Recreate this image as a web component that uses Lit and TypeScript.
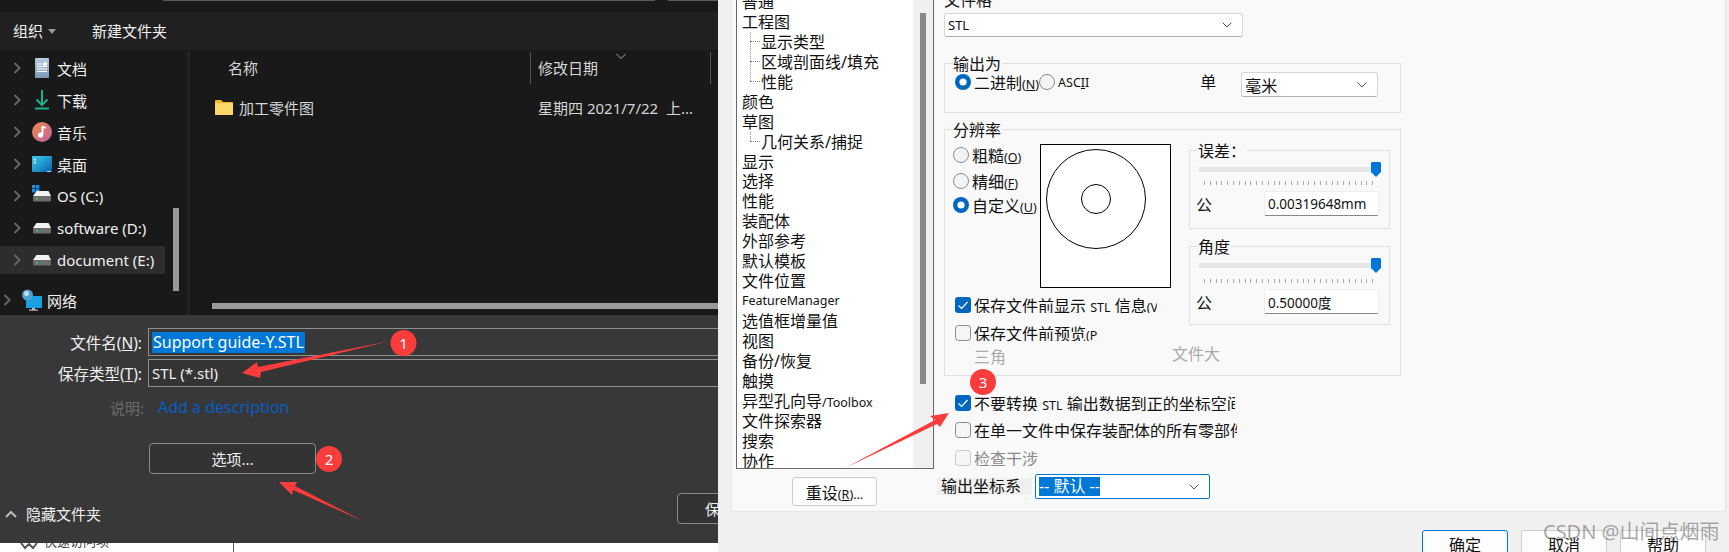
import { LitElement, html, css, svg } from "lit";
import { customElement } from "lit/decorators.js";

const chev = html`<svg class="chev" width="8" height="12" viewBox="0 0 8 12"><path d="M1.5 1 L6.5 6 L1.5 11" fill="none" stroke="#666" stroke-width="2"/></svg>`;
const drive = (win = false) => html`<svg width="22" height="22" viewBox="0 0 22 22">
  ${win ? svg`<g fill="#1a8fe3"><rect x="0" y="0" width="3.4" height="3.4"/><rect x="4" y="0" width="3.4" height="3.4"/><rect x="0" y="4" width="3.4" height="3.4"/><rect x="4" y="4" width="3.4" height="3.4"/></g>` : ""}
  <path d="M4.5 6 H16.5 L19 11 H1 Z" fill="#f2f2f2"/><rect x="1" y="11" width="18" height="5.5" rx="1" fill="#6c6c6c"/><rect x="4" y="13" width="2" height="1.4" fill="#3fd04f"/></svg>`;
const cb = svg`<path d="M3.5 8.5 L6.6 11.4 L12.5 5" fill="none" stroke="#fff" stroke-width="1.2"/>`;
const caret = html`<svg class="caret" width="12" height="8" viewBox="0 0 12 8"><path d="M1.5 1.5 L6 6 L10.5 1.5" fill="none" stroke="#555" stroke-width="1"/></svg>`;

@customElement("app-root")
export class AppRoot extends LitElement {
  static styles = css`
    :host { display: flex; width: 1729px; height: 552px; overflow: hidden; position: relative; font-family: "Noto Sans", "Noto Sans CJK SC", sans-serif; }
    * { box-sizing: border-box; }
    .win-l { width: 718px; height: 552px; flex: none; display: flex; flex-direction: column; color: #f0f0f0; font-size: 15px; overflow: hidden; background: #fff; }
    .top { height: 12px; background: #191919; flex: none; display: flex; }
    .top i { height: 1px; background: #5a5a5a; }
    .t1 { width: 492px; margin-left: 163px; }
    .t2 { width: 50px; margin-left: 13px; }
    .toolbar { height: 38px; background: #202020; flex: none; display: flex; align-items: center; padding-left: 13px; line-height: 20px; }
    .tri { width: 0; height: 0; border: 4.5px solid transparent; border-top: 5px solid #999; border-bottom: 0; margin: 0 36px 0 5px; }
    .nav { height: 265px; flex: none; background: #191919; display: flex; }
    .side { width: 187px; flex: none; display: flex; }
    .side-list { width: 173px; flex: none; padding-top: 2px; }
    .row { height: 32px; display: flex; align-items: center; padding: 0 0 0 13px; position: relative; white-space: nowrap; }
    .row .chev { margin-right: 11px; flex: none; }
    .row .ic { width: 22px; height: 22px; display: flex; flex: none; margin-right: 3px; }
    .row.sel { background: #2d2d2d; background-clip: content-box; padding: 2px 0; width: 165px; border-radius: 0 3px 3px 0; }
    .row.sel .chev { margin-left: 13px; }
    .row.net { margin-top: 8px; padding-left: 3px; }
    .scroll-col { width: 14px; padding: 158px 0 0 0; }
    .scroll-col i { display: block; width: 6px; height: 83px; background: #999; }
    .split { width: 3px; background: #222; flex: none; height: 264px; margin-top: 1px; }
    .main { flex: 1; display: flex; flex-direction: column; color: #d6d6d6; }
    .head { height: 33px; margin-top: 1px; display: flex; align-items: center; flex: none; }
    .h1 { width: 340px; padding-left: 38px; }
    .h2 { width: 181px; height: 32px; border-left: 1px solid #555; border-right: 1px solid #555; padding: 0 0 0 7px; display: flex; align-items: center; position: relative; }
    .sort { position: absolute; left: 84px; top: 1px; }
    .file { height: 26px; margin-top: 10px; display: flex; align-items: center; flex: none; }
    .f1 { width: 340px; display: flex; align-items: center; padding-left: 25px; gap: 6px; }
    .f2 { padding-left: 8px; white-space: pre; }
    .hbar { height: 6px; margin: 183px 0 0 22px; background: #999; flex: none; }
    .bottom { height: 228px; flex: none; background: #383838; padding-top: 13px; }
    .field { display: grid; grid-template-columns: 142px 1fr; column-gap: 6px; align-items: center; height: 28px; margin-bottom: 3px; }
    .field label { text-align: right; white-space: nowrap; font-size: 15.5px; }
    .field u { text-decoration: underline; }
    .inp { height: 28px; border: 1px solid #8f8f8f; border-right: 0; display: flex; align-items: center; padding-left: 3px; background: #343434; width: 600px; }
    .inp.a { background: #383838; }
    .seltext { background: #0078d7; color: #fff; height: 21px; display: flex; align-items: center; padding: 0 1px; font-size: 16px; white-space: nowrap; }
    .desc { display: grid; grid-template-columns: 144px 1fr; column-gap: 14px; align-items: center; height: 20px; margin-top: 9px; }
    .desc span:first-child { text-align: right; color: #6d6d6d; }
    .desc span:last-child { color: #0a5cc2; font-size: 16px; }
    .opt { width: 167px; height: 31px; margin: 27px 0 0 149px; border: 1px solid #8a8a8a; border-radius: 4px; background: #333; display: flex; align-items: center; justify-content: center; }
    .foot { display: flex; height: 31px; margin-top: 19px; }
    .hide { width: 677px; flex: none; padding: 11px 0 0 5px; display: flex; align-items: center; gap: 9px; height: 31px; line-height: 20px; }
    .save { width: 120px; height: 31px; border: 1px solid #8a8a8a; border-radius: 4px; background: #333; padding-left: 27px; display: flex; align-items: center; flex: none; white-space: nowrap; }
    .white { height: 9px; flex: none; background: #fff; display: flex; overflow: hidden; }
    .white-l { width: 234px; border-right: 1px solid #555; color: #444; font-size: 13px; line-height: 13px; padding: 0 0 0 20px; display: flex; gap: 6px; align-items: flex-start; white-space: nowrap; }
    .white-l span { margin-top: -8px; }

    .win-r { width: 1011px; height: 552px; flex: none; background: #f0f0f0; padding: 0 3px 0 13px; color: #111; font-size: 16px; display: flex; flex-direction: column; overflow: hidden; }
    .panel { height: 512px; flex: none; background: #f9f9f9; border: 1px solid #e6e6e6; border-top: 0; display: flex; }
    .tree-col { width: 202px; padding-left: 4px; flex: none; }
    .tree { height: 469px; width: 198px; border: 1px solid #696969; border-top: 0; background: #fff; display: flex; }
    .list { width: 176px; flex: none; overflow: hidden; padding: 0 0 0 5px; }
    .li { height: 19.95px; line-height: 20px; white-space: nowrap; }
    .list > .li:first-child { margin-top: -8px; }
    .li.lat { font-size: 12.5px; }
    .lat2 { font-size: 12.5px; }
    .subs { background: repeating-linear-gradient(#999 0 1px, transparent 1px 2px) 8px 0 / 1px calc(100% - 10px) no-repeat; }
    .sub { display: flex; align-items: center; padding-left: 8px; }
    .sub::before { content: ""; width: 10px; border-top: 1px dotted #888; margin-right: 1px; }
    .sbar { width: 20px; background: #f0f0f0; flex: none; padding: 13px 0 0 7px; }
    .sbar i { display: block; width: 6px; height: 371px; background: #888; }
    .reset { width: 85px; height: 29px; margin: 8px 0 0 56px; background: #fdfdfd; border: 1px solid #ccc; border-radius: 3px; display: flex; align-items: center; justify-content: center; }
    small { font-size: 12.5px; }
    .form { width: 457px; margin-left: 10px; flex: none; display: flex; flex-direction: column; }
    .cl { height: 20px; margin-top: -10px; line-height: 20px; }
    .sel-box { height: 24px; background: #fff; border: 1px solid #d5d5d5; border-bottom-color: #b0b0b0; border-radius: 3px; display: flex; align-items: center; justify-content: space-between; padding: 0 9px 0 3px; }
    .stl { width: 299px; margin-top: 3px; font-size: 13px; }
    .mm { width: 137px; height: 25px; margin-left: 41px; }
    .grp { border: 1px solid #e0e0e0; display: flex; flex-direction: column; flex: none; }
    .legend { height: 20px; line-height: 20px; margin: -10px 0 0 8px; align-self: flex-start; background: #f9f9f9; padding-right: 1px; }
    .g1 { height: 50px; margin-top: 26px; }
    .g1row { display: flex; height: 25px; margin-top: -2px; padding-left: 10px; }
    .radio { display: flex; align-items: center; gap: 3px; height: 20px; white-space: nowrap; }
    .radio svg { flex: none; }
    .unit { margin-left: 111px; width: 0; white-space: nowrap; height: 20px; line-height: 20px; }
    .g2 { height: 247px; margin-top: 16px; }
    .g2body { display: flex; }
    .g2l { width: 244px; flex: none; padding-left: 8px; }
    .g2top { display: flex; height: 148px; }
    .radios { width: 87px; flex: none; padding-top: 5px; display: flex; flex-direction: column; }
    .radios .radio:nth-child(2) { margin-top: 6px; }
    .radios .radio:nth-child(3) { margin-top: 4px; }
    .prev { margin-top: 4px; width: 131px; height: 144px; flex: none; border: 1px solid #000; background: #fff; display: flex; }
    .chk { display: flex; align-items: center; gap: 3px; height: 16px; white-space: nowrap; overflow: hidden; flex: none; }
    .chk svg { flex: none; }
    .c1 { width: 202px; margin: 9px 0 0 2px; }
    .c2 { width: 142px; margin: 12px 0 0 2px; }
    .dimrow { display: flex; height: 20px; margin: 6px 0 0 21px; color: #aaa; line-height: 20px; white-space: nowrap; }
    .dimrow span:first-child { width: 198px; flex: none; }
    .dimrow span:last-child { margin-top: -3px; }
    .g2r { width: 201px; flex: none; padding-top: 10px; display: flex; flex-direction: column; gap: 17px; }
    .sub-grp { height: 79px; border: 1px solid #e0e0e0; display: flex; flex-direction: column; }
    .track { height: 15px; margin: 1px 8px 0 9px; background: linear-gradient(#e5e7e6, #e5e7e6) center / 100% 5px no-repeat; display: flex; justify-content: flex-end; }
    .ticks { height: 4px; margin: 4px 0 0 14px; width: 172px; background: repeating-linear-gradient(90deg, #aaa 0 1px, transparent 1px 5.8px); flex: none; }
    .ticks.a { margin-top: 6px; }
    .tol { display: flex; justify-content: space-between; align-items: center; height: 25px; margin: 6px 10px 0 6px; }
    .num { width: 115px; height: 25px; background: #fff; border: 1px solid #eee; border-bottom: 1px solid #888; border-radius: 2px; display: flex; align-items: center; padding-left: 3px; font-size: 13.5px; }
    .c3 { width: 280px; margin: 19px 0 0 11px; }
    .c4 { width: 282px; margin: 11px 0 0 11px; }
    .c5 { width: 180px; margin: 12px 0 0 11px; color: #888; }
    .csys { display: flex; margin: 8px 0 0 -7px; height: 25px; align-items: center; }
    .csys-l { width: 95px; height: 17px; background: #f0f0f0; padding-left: 4px; line-height: 17px; margin-right: 3px; }
    .csys-s { width: 175px; height: 25px; border: 1px solid #0078d7; border-radius: 2px; background: #fff; display: flex; align-items: center; justify-content: space-between; padding: 0 9px 0 3px; }
    .csys-s b { background: #0078d7; color: #fff; font-weight: 400; height: 19px; line-height: 19px; width: 61px; white-space: nowrap; overflow: hidden; }
    .btns { display: flex; gap: 13px; margin: 18px 0 0 691px; flex: none; }
    .btn { width: 86px; height: 36px; background: #fdfdfd; border: 1px solid #ccc; border-radius: 3px; display: flex; justify-content: center; padding-top: 4px; line-height: 20px; }
    .btn.def { border: 1px solid #0078d7; }

    .over { position: absolute; left: 0; top: 0; pointer-events: none; }
    .over text { font-family: "Noto Sans", sans-serif; font-size: 15px; fill: #fff; text-anchor: middle; }
    .wm { position: absolute; left: 1543px; top: 519px; font-size: 20px; line-height: 26px; color: rgba(110,110,110,.6); white-space: nowrap; }
  `;

  render() {
    const radioOn = html`<svg width="16" height="16" viewBox="0 0 16 16"><circle cx="8" cy="8" r="8" fill="#0067c0"/><circle cx="8" cy="8" r="3.6" fill="#fff"/></svg>`;
    const radioOff = html`<svg width="16" height="16" viewBox="0 0 16 16"><circle cx="8" cy="8" r="7.5" fill="#f3f3f3" stroke="#8a8a8a"/></svg>`;
    const on = html`<svg width="16" height="16" viewBox="0 0 16 16"><rect width="16" height="16" rx="3" fill="#0067c0"/>${cb}</svg>`;
    const off = html`<svg width="16" height="16" viewBox="0 0 16 16"><rect x=".5" y=".5" width="15" height="15" rx="3" fill="#f5f5f5" stroke="#8a8a8a"/></svg>`;
    const dis = html`<svg width="16" height="16" viewBox="0 0 16 16"><rect x=".5" y=".5" width="15" height="15" rx="3" fill="#f5f5f5" stroke="#c8c8c8"/></svg>`;
    const thumb = html`<svg width="10" height="15" viewBox="0 0 10 15"><path d="M1 0 H9 a1 1 0 0 1 1 1 V10 L5 15 L0 10 V1 a1 1 0 0 1 1-1Z" fill="#0078d7"/></svg>`;
    const tree = ["普通", "工程图", "#显示类型|区域剖面线/填充|性能", "颜色", "草图", "#几何关系/捕捉", "显示", "选择", "性能", "装配体", "外部参考", "默认模板", "文件位置"];
    const tree2 = ["选值框增量值", "视图", "备份/恢复", "触摸"];
    const li = (t: string) => t.startsWith("#")
      ? html`<div class="subs">${t.slice(1).split("|").map((s) => html`<div class="li sub">${s}</div>`)}</div>`
      : html`<div class="li">${t}</div>`;
    return html`
      <div class="win-l">
        <div class="top"><i class="t1"></i><i class="t2"></i></div>
        <div class="toolbar"><span>组织</span><i class="tri"></i><span>新建文件夹</span></div>
        <div class="nav">
          <div class="side">
            <div class="side-list">
              <div class="row">${chev}<span class="ic"><svg width="22" height="22" viewBox="0 0 22 22"><defs><linearGradient id="dg" x1="0" y1="0" x2="0" y2="1"><stop offset="0" stop-color="#b9cbde"/><stop offset="1" stop-color="#7d99b5"/></linearGradient></defs><rect x="3" y="1" width="14" height="20" rx="1" fill="url(#dg)"/><path d="M5 7H10M5 9.5H15M5 12H15M5 14.5H15" stroke="#fff" stroke-width="1"/><rect x="11" y="5.5" width="4" height="3" fill="#fff"/></svg></span>文档</div>
              <div class="row">${chev}<span class="ic"><svg width="22" height="22" viewBox="0 0 22 22"><path d="M10 1V16M4.5 10.5L10 16L15.5 10.5" fill="none" stroke="#1fae8f" stroke-width="2"/><rect x="3" y="18.5" width="14" height="2" fill="#1fae8f"/></svg></span>下载</div>
              <div class="row">${chev}<span class="ic"><svg width="22" height="22" viewBox="0 0 22 22"><defs><linearGradient id="mg" x1="0" y1="0" x2="1" y2="1"><stop offset="0" stop-color="#ef8a4d"/><stop offset="1" stop-color="#c0619f"/></linearGradient></defs><circle cx="10" cy="11" r="10" fill="url(#mg)"/><path d="M10.5 5V13.5" stroke="#fff" stroke-width="2"/><path d="M10.5 5.5L14 7" stroke="#fff" stroke-width="1.6"/><circle cx="8.5" cy="14" r="2.6" fill="#fff"/></svg></span>音乐</div>
              <div class="row">${chev}<span class="ic"><svg width="22" height="22" viewBox="0 0 22 22"><defs><linearGradient id="kg" x1="0" y1="0" x2="1" y2="1"><stop offset="0" stop-color="#3ccdf0"/><stop offset="1" stop-color="#0562ab"/></linearGradient></defs><rect y="3" width="20" height="16" rx="1" fill="url(#kg)"/><rect x="2" y="6" width="1.6" height="1.6" fill="#fff"/><rect x="2" y="9" width="1.6" height="1.6" fill="#fff"/><rect x="15" y="18" width="4" height="1" fill="#cde"/></svg></span>桌面</div>
              <div class="row">${chev}<span class="ic">${drive(true)}</span>OS (C:)</div>
              <div class="row">${chev}<span class="ic">${drive()}</span>software (D:)</div>
              <div class="row sel">${chev}<span class="ic">${drive()}</span>document (E:)</div>
              <div class="row net">${chev}<span class="ic"><svg width="22" height="22" viewBox="0 0 22 22"><rect x="4" y="7" width="16" height="12" fill="#18a0e0"/><rect x="10" y="19" width="3" height="2" fill="#bbb"/><rect x="7" y="20.5" width="9" height="1.2" fill="#bbb"/><circle cx="5.5" cy="6" r="5.5" fill="#4f9fd0"/><circle cx="4.5" cy="4.5" r="2.5" fill="#bfe0f2"/></svg></span>网络</div>
            </div>
            <div class="scroll-col"><i></i></div>
          </div>
          <div class="split"></div>
          <div class="main">
            <div class="head"><div class="h1">名称</div><div class="h2">修改日期<svg class="sort" width="12" height="7" viewBox="0 0 12 7"><path d="M1.5 1L6 5.5L10.5 1" fill="none" stroke="#aaa"/></svg></div></div>
            <div class="file">
              <div class="f1"><svg width="18" height="15" viewBox="0 0 18 15"><path d="M0 1a1 1 0 0 1 1-1H6L8 2H17a1 1 0 0 1 1 1V14a1 1 0 0 1-1 1H1a1 1 0 0 1-1-1Z" fill="#f2b824"/><rect y="3" width="18" height="12" rx="1" fill="#fad768"/></svg><span>加工零件图</span></div>
              <div class="f2">星期四 2021/7/22  上...</div>
            </div>
            <div class="hbar"></div>
          </div>
        </div>
        <div class="bottom">
          <div class="field"><label>文件名(<u>N</u>):</label><div class="inp a"><span class="seltext">Support guide-Y.STL</span></div></div>
          <div class="field"><label>保存类型(<u>T</u>):</label><div class="inp">STL (*.stl)</div></div>
          <div class="desc"><span>说明:</span><span>Add a description</span></div>
          <div class="opt">选项...</div>
          <div class="foot">
            <div class="hide"><svg width="12" height="8" viewBox="0 0 12 8"><path d="M1 7L6 2L11 7" fill="none" stroke="#bbb" stroke-width="2"/></svg><span>隐藏文件夹</span></div>
            <div class="save">保存(S)</div>
          </div>
        </div>
        <div class="white"><div class="white-l"><svg width="18" height="9" viewBox="0 0 18 9"><path d="M1 0L5 5L9 1L13 5L17 0" fill="none" stroke="#555" stroke-width="2"/></svg><span>快速访问项</span></div></div>
      </div>

      <div class="win-r">
        <div class="panel">
          <div class="tree-col">
            <div class="tree">
              <div class="list">
                ${tree.map(li)}
                <div class="li lat">FeatureManager</div>
                ${tree2.map(li)}
                <div class="li">异型孔向导<span class="lat2">/Toolbox</span></div>
                ${["文件探索器", "搜索", "协作"].map(li)}
              </div>
              <div class="sbar"><i></i></div>
            </div>
            <div class="reset"><span>重设<small>(<u>R</u>)...</small></span></div>
          </div>
          <div class="form">
            <div class="cl">文件格</div>
            <div class="sel-box stl"><span>STL</span>${caret}</div>
            <div class="grp g1">
              <div class="legend">输出为</div>
              <div class="g1row">
                <div class="radio">${radioOn}<span>二进制<small>(<u>N</u>)</small></span></div>
                <div class="radio">${radioOff}<small>ASC<u>I</u>I</small></div>
                <div class="unit">单</div>
                <div class="sel-box mm"><span>毫米</span>${caret}</div>
              </div>
            </div>
            <div class="grp g2">
              <div class="legend">分辨率</div>
              <div class="g2body">
                <div class="g2l">
                  <div class="g2top">
                    <div class="radios">
                      <div class="radio">${radioOff}<span>粗糙<small>(<u>O</u>)</small></span></div>
                      <div class="radio">${radioOff}<span>精细<small>(<u>F</u>)</small></span></div>
                      <div class="radio">${radioOn}<span>自定义<small>(<u>U</u>)</small></span></div>
                    </div>
                    <div class="prev"><svg width="129" height="142" viewBox="0 0 129 142"><circle cx="55" cy="54" r="49.5" fill="none" stroke="#000"/><circle cx="55" cy="54" r="14.5" fill="none" stroke="#000"/></svg></div>
                  </div>
                  <div class="chk c1">${on}<span>保存文件前显示 <small>STL</small> 信息<small>(V)</small></span></div>
                  <div class="chk c2">${off}<span>保存文件前预览<small>(P)</small></span></div>
                  <div class="dimrow"><span>三角</span><span>文件大</span></div>
                </div>
                <div class="g2r">
                  <div class="sub-grp">
                    <div class="legend">误差：</div>
                    <div class="track">${thumb}</div>
                    <div class="ticks"></div>
                    <div class="tol"><span>公</span><div class="num">0.00319648mm</div></div>
                  </div>
                  <div class="sub-grp">
                    <div class="legend">角度</div>
                    <div class="track">${thumb}</div>
                    <div class="ticks a"></div>
                    <div class="tol"><span>公</span><div class="num">0.50000度</div></div>
                  </div>
                </div>
              </div>
            </div>
            <div class="chk c3">${on}<span>不要转换 <small>STL</small> 输出数据到正的坐标空间</span></div>
            <div class="chk c4">${off}<span>在单一文件中保存装配体的所有零部件</span></div>
            <div class="chk c5">${dis}<span>检查干涉</span></div>
            <div class="csys"><div class="csys-l">输出坐标系</div><div class="csys-s"><b>-- 默认 --</b>${caret}</div></div>
          </div>
        </div>
        <div class="btns"><div class="btn def">确定</div><div class="btn">取消</div><div class="btn">帮助</div></div>
      </div>

      <svg class="over" width="1729" height="552" viewBox="0 0 1729 552">
        <g fill="#fa3c3c">
          <polygon points="390,341 258,367 257,362 242,373 260,378 261,372"/>
          <polygon points="363,521 295,486 297,482 279,482 292,495 293,490"/>
          <polygon points="845,468 935,420 930,416 949,413 940,427 937,424"/>
          <circle cx="403.5" cy="343" r="13"/><circle cx="329" cy="459" r="13"/><circle cx="983" cy="382" r="13"/>
        </g>
        <text x="403.5" y="348.5">1</text><text x="329" y="464.5">2</text><text x="983" y="387.5">3</text>
      </svg>
      <div class="wm">CSDN @山间点烟雨</div>
    `;
  }
}
